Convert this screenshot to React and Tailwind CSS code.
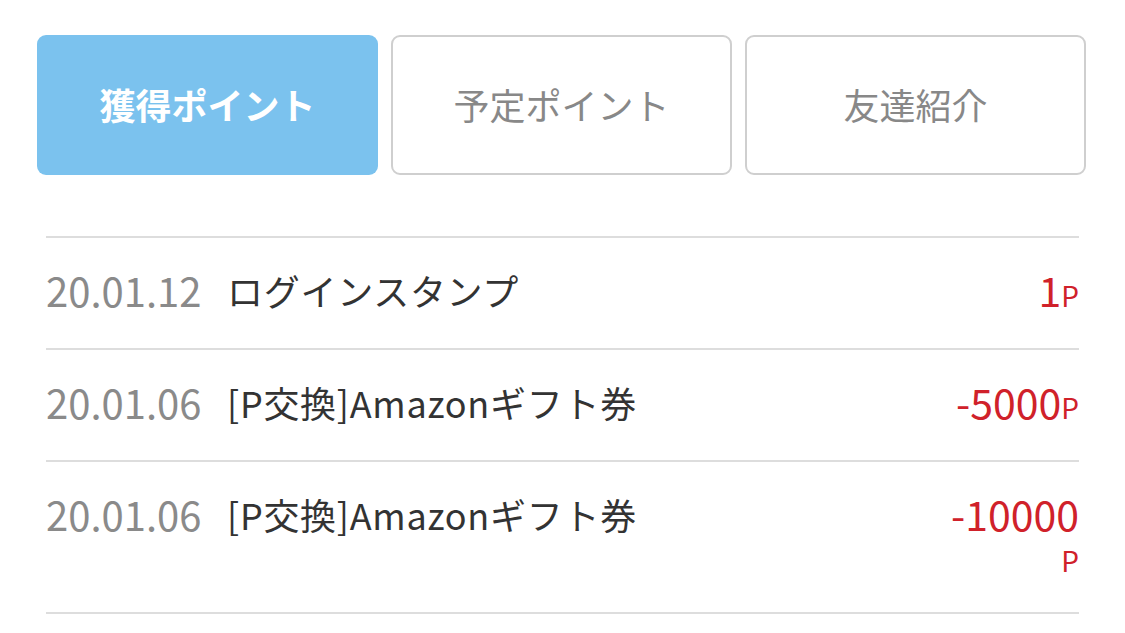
import React from 'react';

const font = { fontFamily: '"Noto Sans CJK JP", "Noto Sans", sans-serif' };

const tabs = [
    { label: '獲得ポイント', active: true },
    { label: '予定ポイント', active: false },
    { label: '友達紹介', active: false },
];

const rows = [
    { date: '20.01.12', title: 'ログインスタンプ', amount: '1' },
    { date: '20.01.06', title: '[P交換]Amazonギフト券', amount: '-5000' },
    { date: '20.01.06', title: '[P交換]Amazonギフト券', amount: '-10000' },
];

export default function App() {
    return (
        <div className="min-h-[633px] bg-white pt-[35px] pl-[37px] pr-[39px]" style={font}>
            {/* タブ */}
            <div className="grid grid-cols-3 gap-[13px]">
                {tabs.map(tab => (
                    <div
                        key={tab.label}
                        className={
                            tab.active
                                ? 'h-[140px] rounded-[9px] bg-[#7bc2ee] flex items-center justify-center pb-[3px] text-white font-bold text-[36px]'
                                : 'h-[140px] rounded-[9px] border-2 border-[#cfcfcf] flex items-center justify-center pb-[3px] text-[#888888] text-[36px]'
                        }
                    >
                        {tab.label}
                    </div>
                ))}
            </div>

            {/* 履歴 */}
            <div className="mt-[61px] ml-[9px] mr-[7px] border-t-2 border-[#dddddd]">
                {rows.map((row, i) => (
                    <div key={i} className="flex items-start pt-[31px] pb-[37px] border-b-2 border-[#dddddd]">
                        <span className="text-[40px] leading-[42px] text-[#8a8a8a] w-[181px] shrink-0">{row.date}</span>
                        <span className="flex-1 text-[36px] leading-[42px] tracking-[0.02em] text-[#333333]">{row.title}</span>
                        <span className="w-[136px] text-right text-[#d0212a] text-[41px] leading-[41px] break-all">
                            {row.amount}
                            <span className="text-[28px] leading-none">P</span>
                        </span>
                    </div>
                ))}
            </div>
        </div>
    );
}
